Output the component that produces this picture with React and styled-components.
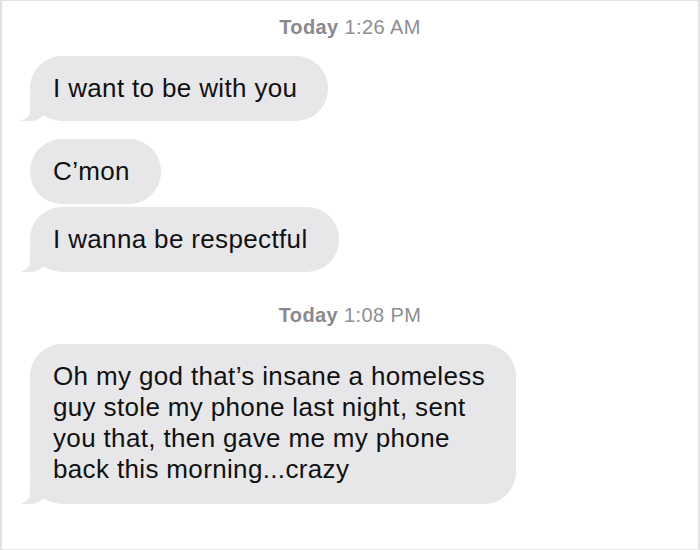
import React from "react";
import styled, { createGlobalStyle } from "styled-components";

const bubbleGray = "#e7e7ea";

const GlobalStyle = createGlobalStyle`
  html, body {
    margin: 0;
    padding: 0;
    background: #ffffff;
  }
  * {
    box-sizing: border-box;
  }
`;

const thread = [
  {
    time: "1:26 AM",
    gap: 15,
    messages: ["I want to be with you"],
  },
  {
    time: null,
    gap: 18,
    messages: ["C\u2019mon", "I wanna be respectful"],
  },
  {
    time: "1:08 PM",
    gap: 32,
    messages: [
      [
        "Oh my god that\u2019s insane a homeless",
        "guy stole my phone last night, sent",
        "you that, then gave me my phone",
        "back this morning...crazy",
      ],
    ],
  },
];

const App = () => {
  return (
    <>
      <GlobalStyle />
      <Screen>
        {thread.map((group, gi) => (
          <Group key={gi} $gap={group.gap}>
            {group.time && (
              <Stamp>
                <strong>Today</strong> {group.time}
              </Stamp>
            )}
            {group.messages.map((msg, mi) => {
              const lines = Array.isArray(msg) ? msg : [msg];
              return (
                <Bubble
                  key={mi}
                  $tail={mi === group.messages.length - 1}
                  $multi={lines.length > 1}
                >
                  {lines.map((line, li) => (
                    <React.Fragment key={li}>
                      {li > 0 && <br />}
                      {line}
                    </React.Fragment>
                  ))}
                </Bubble>
              );
            })}
          </Group>
        ))}
      </Screen>
    </>
  );
};

const Screen = styled.div`
  width: 700px;
  height: 550px;
  overflow: hidden;
  background: #ffffff;
  border-top: 1px solid #e2e2e2;
  border-left: 2px solid #e2e2e2;
  border-right: 2px solid #e2e2e2;
  border-bottom: 1px solid #e8e8e8;
  display: flex;
  flex-direction: column;
  padding-left: 28px;
  font-family: "Liberation Sans", Arial, sans-serif;
`;

const Group = styled.div`
  display: flex;
  flex-direction: column;
  align-items: flex-start;
  margin-top: ${(p) => p.$gap}px;
`;

const Stamp = styled.div`
  align-self: stretch;
  margin-right: 28px;
  margin-bottom: 18px;
  text-align: center;
  font-size: 20px;
  line-height: 22px;
  letter-spacing: 0.4px;
  color: #8e8e93;

  > strong {
    font-weight: 700;
    color: #8a8a8e;
  }
`;

const Bubble = styled.div`
  position: relative;
  padding: 17px 31px ${(p) => (p.$multi ? 19 : 17)}px 23px;
  border-radius: 32px;
  background: ${bubbleGray};
  color: #111111;
  font-size: 26px;
  line-height: 31px;
  letter-spacing: 0.35px;
  white-space: nowrap;

  & + & {
    margin-top: 3px;
  }

  ${(p) =>
    p.$tail &&
    `
    &::before {
      content: "";
      position: absolute;
      bottom: 0;
      left: -9px;
      width: 27px;
      height: 26px;
      background: ${bubbleGray};
      border-bottom-right-radius: 18px 16px;
    }
    &::after {
      content: "";
      position: absolute;
      bottom: 0;
      left: -17px;
      width: 17px;
      height: 27px;
      background: #ffffff;
      border-bottom-right-radius: 12px 10px;
    }
  `}
`;

export default App;
